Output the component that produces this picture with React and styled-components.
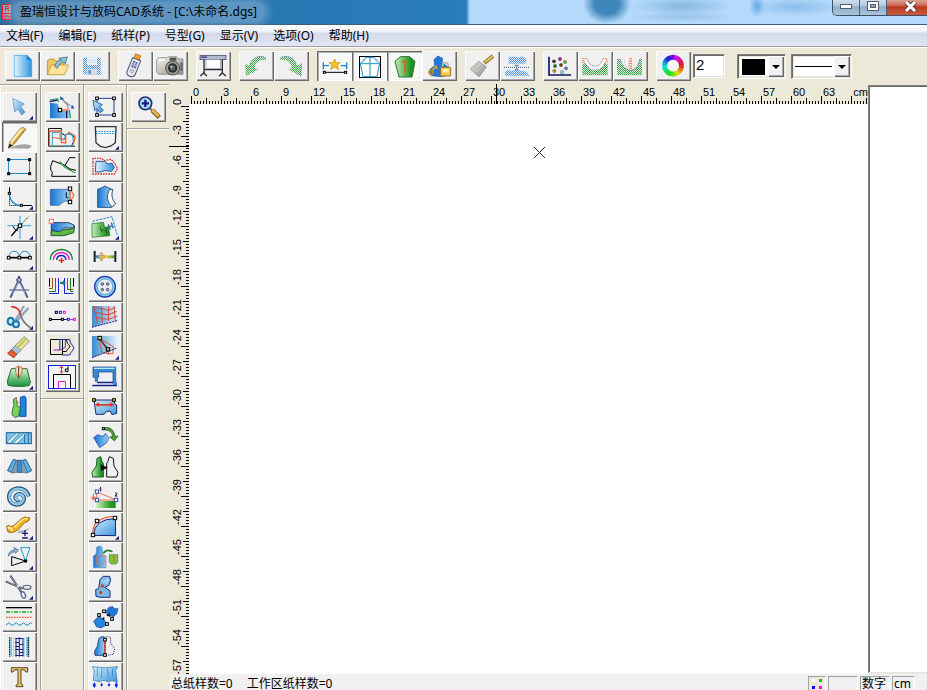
import React from 'react';
import styled, { createGlobalStyle, css } from 'styled-components';

const NAVY = '#1b1f7a';
const BLUE = '#1e78d8';

const Sq = ({ x, y, c = '#000', f = '#fff', r = 5 }) => (
  <rect x={x - r} y={y - r} width={r * 2} height={r * 2} fill={f} stroke={c} strokeWidth="3" />
);

const Line = ({ d, c = '#000', w = 3, f = 'none', dash }) => (
  <path d={d} stroke={c} strokeWidth={w} fill={f} strokeDasharray={dash} />
);

const hues = Array.from({ length: 24 }, (_, i) => i * 15);

const wheelArc = (deg) => {
  const a = ((deg - 90) * Math.PI) / 180;
  const b = ((deg - 74) * Math.PI) / 180;
  return `M${51 + 25 * Math.cos(a)} ${44 + 25 * Math.sin(a)} A25 25 0 0 1 ${51 + 25 * Math.cos(b)} ${44 + 25 * Math.sin(b)}`;
};

/* every drawing uses a 105 x 90 grid, three units to a pixel */
const art = {
  newFile: (
    <>
      <path d="M28 13H66L80 27V77H28Z" fill="url(#sheet)" stroke="#3a9be0" strokeWidth="2" />
      <path d="M66 13V27H80Z" fill="#1583d6" />
    </>
  ),
  open: (
    <>
      <path d="M22 30L28 24H42L47 30H72V70H22Z" fill="#f0c766" stroke="#a87a2a" strokeWidth="2" />
      <path d="M22 71L34 42H86L74 71Z" fill="#fde49a" stroke="#b5852e" strokeWidth="2" />
      <path d="M44 46C48 34 54 28 64 28L56 22L82 18L76 38L71 33C62 35 56 42 52 52Z" fill="#8cc4d8" stroke="#35566a" strokeWidth="2" />
    </>
  ),
  save: (
    <>
      <path d="M24 20H77V71H30L24 65Z" fill="url(#ditherBlue)" />
      <rect x="36" y="20" width="30" height="22" fill="#eef2f7" />
      <path d="M39 27H63M39 33H63" stroke="#b8cce2" strokeWidth="2" />
      <rect x="36" y="54" width="30" height="17" fill="#d2deea" />
      <rect x="40" y="57" width="8" height="12" fill="#6f93c0" />
    </>
  ),
  usb: (
    <g transform="rotate(22 50 45)">
      <rect x="39" y="10" width="17" height="16" fill="#f59a2c" stroke="#b2641a" strokeWidth="2" />
      <path d="M35 24H61V68Q61 79 48 79Q35 79 35 68Z" fill="#e8e8f2" stroke="#53536b" strokeWidth="3" />
      <rect x="41" y="32" width="14" height="20" fill="#5a64a8" />
      <path d="M41 38H55M41 44H55M48 32V52" stroke="#dfe3f6" strokeWidth="2" />
      <path d="M41 60H55M43 66H53" stroke="#8a8aa0" strokeWidth="3" />
    </g>
  ),
  camera: (
    <>
      <path d="M11 28L16 20H42L48 17H70L78 24H90V70H18L11 64Z" fill="url(#metal)" stroke="#77776f" strokeWidth="2" />
      <rect x="50" y="20" width="20" height="9" fill="#504f49" />
      <rect x="18" y="24" width="16" height="6" fill="#fff" />
      <circle cx="59" cy="51" r="21" fill="#9b9a92" stroke="#54534e" strokeWidth="3" />
      <circle cx="59" cy="51" r="14" fill="#2c2d2d" />
      <circle cx="59" cy="51" r="8" fill="#5b6768" />
      <circle cx="55" cy="47" r="3" fill="#dfe8e8" />
      <rect x="82" y="34" width="7" height="26" fill="#6c6b64" />
    </>
  ),
  plotter: (
    <>
      <rect x="12" y="13" width="78" height="13" fill="#b6b9d2" stroke="#34345c" strokeWidth="2" />
      <rect x="30" y="26" width="43" height="27" fill="#fdfdfd" stroke="#8c8c9c" strokeWidth="2" />
      <path d="M24 27V68M79 27V68M24 56H79" stroke="#2d2d38" strokeWidth="4" fill="none" />
      <path d="M13 75L23 66L33 75M69 75L79 66L90 75" stroke="#2d2d38" strokeWidth="4" fill="none" />
      <rect x="15" y="16" width="18" height="5" fill="#53578f" />
    </>
  ),
  undo: (
    <>
      <path d="M81 21C62 10 36 20 33 44L18 38L21 76L58 55L47 51C49 34 62 24 81 27Z" fill="url(#ditherGreen)" />
      <path d="M81 21C62 10 36 20 33 44" fill="none" stroke="#4d74b4" strokeWidth="3" strokeDasharray="3 3" />
    </>
  ),
  redo: (
    <>
      <path d="M19 21C38 10 64 20 67 44L83 38L80 76L43 55L54 51C52 34 38 24 19 27Z" fill="url(#ditherGreen)" />
      <path d="M19 21C38 10 64 20 67 44M83 38L80 76" fill="none" stroke="#4d74b4" strokeWidth="3" strokeDasharray="3 3" />
    </>
  ),
  starLine: (
    <>
      <Line d="M19 34V55M89 34V55M19 44H36M71 44H89" c="#1584c8" w={4} />
      <path d="M53 24L58 35H70L61 43L65 56L53 48L41 56L45 43L36 35H48Z" fill="#f5c328" stroke="#c48a12" strokeWidth="2" />
      <Line d="M22 64H86" />
      <Sq x={22} y={64} r={3} />
      <Sq x={86} y={64} r={3} />
    </>
  ),
  frame: (
    <>
      <rect x="22.5" y="16.5" width="63" height="63" fill="#fff" stroke="#000" strokeWidth="3" />
      <Line d="M42 19L25 37L33 77H75L83 37L66 19ZM54 17V78M25 38H83" c="#1d8fcb" />
      <Line d="M42 20L32 38M66 20L76 38" c="#6cb8e0" w={2} />
    </>
  ),
  greenPiece: (
    <>
      <path d="M24 31L40 17H68L84 31L75 78H36Z" fill="url(#greenSide)" stroke="#2f6a33" strokeWidth="3" />
      <path d="M46 35L54 29V68" stroke="#f05a28" strokeWidth="5" fill="none" />
    </>
  ),
  lock: (
    <>
      <path d="M36 26L47 15L62 22L60 35L84 52L80 72L58 77L28 74L24 55L38 44Z" fill={BLUE} stroke="#1954a8" strokeWidth="2" />
      <circle cx="27" cy="64" r="6" fill="none" stroke="#c18c1c" strokeWidth="5" />
      <Line d="M31 58L44 43M40 48L47 53" c="#d4a02c" w={5} />
      <path d="M62 50V43Q62 35 70 35Q79 35 79 43V50" fill="none" stroke="#b6b6b6" strokeWidth="5" />
      <rect x="56" y="49" width="30" height="26" rx="2" fill="#f6c94f" stroke="#9c7420" strokeWidth="3" />
      <rect x="62" y="54" width="18" height="10" fill="#fff1b0" />
    </>
  ),
  brush: (
    <>
      <Line d="M58 36L84 15" c="#8a7228" w={12} />
      <Line d="M60 34L83 16" c="#e8c864" w={6} />
      <path d="M41 31L64 48L42 77L16 54Z" fill="url(#metal)" stroke="#777" strokeWidth="2" />
      <Line d="M23 55L44 36M30 60L51 42M37 67L57 47" c="#999" w={2} />
    </>
  ),
  pieces: (
    <>
      <path d="M26 17H50L57 21L62 16L76 20L80 30L74 38H26Z" fill="url(#ditherBlue)" />
      <Line d="M12 49H90" c="#44546c" dash="3 3" />
      <path d="M15 64L24 56L36 60L48 57L70 60L82 64L88 74H15Z" fill="url(#ditherBlue)" />
      <path d="M42 41H58L50 48ZM42 58H58L50 51Z" fill="#6c86a8" />
    </>
  ),
  scatter: (
    <>
      <Line d="M18 17V72H84" c="#12126a" w={5} />
      {[
        [33, 31, '#333'], [51, 24, '#c0188c'], [66, 33, '#67b32c'], [36, 45, '#13883a'], [54, 42, '#7d3a12'],
        [69, 52, '#6078c8'], [34, 60, '#b99b18'], [57, 63, '#8fd8d8'],
      ].map(([x, y, c]) => (
        <circle key={c} cx={x} cy={y} r="5" fill={c} stroke="#333" strokeWidth="1" />
      ))}
    </>
  ),
  grassCurve: (
    <>
      <path d="M13 39L24 36C34 66 68 66 78 36L89 39V73H13Z" fill="url(#ditherGreen)" />
      <path d="M22 24C30 62 72 62 80 24" fill="none" stroke="#fff" strokeWidth="6" />
      <path d="M28 24C34 52 68 52 74 24M18 30C28 66 74 66 84 30" fill="none" stroke="#77779a" strokeWidth="2" strokeDasharray="4 2" />
      <Line d="M15 36V23H27M75 23H87V36" c="#ff6238" w={4} dash="3 3" />
    </>
  ),
  grassFold: (
    <>
      <path d="M12 22L20 24C24 44 36 56 53 58C68 56 78 44 80 24L87 22V73H12Z" fill="url(#ditherGreen)" />
      <path d="M22 25C26 45 38 56 53 58M80 25C76 45 68 56 53 58" fill="none" stroke="#6f7196" strokeWidth="3" strokeDasharray="4 2" />
      <path d="M34 25L38 44L46 50V25" fill="#fff" stroke="#999" strokeWidth="2" strokeDasharray="3 2" />
      <Line d="M53 21V56" c="#ff7a52" w={7} dash="3 2" />
    </>
  ),
  wheel: (
    <>
      {hues.map((h) => (
        <path key={h} d={wheelArc(h)} stroke={`hsl(${(280 + h) % 360} 90% 46%)`} strokeWidth="15" fill="none" />
      ))}
      <circle cx="51" cy="44" r="17" fill="#f8f8f8" />
    </>
  ),

  pointer: <path d="M32 19L67 36L56 43L69 61L59 69L47 51L38 60Z" fill="url(#sky)" stroke="#5f87b5" strokeWidth="2" />,
  pencil: (
    <>
      <path d="M20 79L44 70Q72 62 90 72L80 80Z" fill="#a4a4a0" />
      <path d="M19 79L23 60L56 18Q66 13 72 22L36 67Z" fill="#e9ca72" stroke="#84652a" strokeWidth="2" />
      <path d="M28 61L60 21" stroke="#fff4c4" strokeWidth="5" />
      <path d="M34 65L68 23" stroke="#b58b30" strokeWidth="4" />
      <path d="M19 79L22 66L33 70Z" fill="#222" />
    </>
  ),
  rect: (
    <>
      <Line d="M19.5 22.5H82.5V64.5H19.5Z" c="#1e8ac8" />
      {[[20, 23], [83, 23], [20, 65], [83, 65]].map(([x, y]) => (
        <Sq key={`${x}-${y}`} x={x} y={y} r={3} f="#1a4848" />
      ))}
    </>
  ),
  corner: (
    <>
      <Line d="M22.5 16V34M58 70.5H90" />
      <Line d="M22.5 34V70.5H58" dash="3 3" />
      <Line d="M22 34C24 56 34 70 58 70" c="#188ed0" w={4} />
      <Sq x={22} y={34} r={3} />
      <Sq x={58} y={70} r={3} />
    </>
  ),
  cross: (
    <>
      <Line d="M54 12V81M16 41H87" c="#56b2dc" w={4} />
      <Line d="M28 72L54 41" w={4} />
      <Line d="M54 41L80 14" dash="4 3" />
      <Line d="M33 43Q36 54 48 57" />
      <Sq x={54} y={41} />
    </>
  ),
  arcs: (
    <>
      <Line d="M20 44Q24 28 36 28Q50 28 52 44Q56 28 68 28Q82 28 84 44" c="#2188c4" />
      <Line d="M20 47H84" w={5} />
      <Sq x={20} y={47} r={4} />
      <Sq x={52} y={47} r={4} />
      <Sq x={84} y={47} r={4} />
    </>
  ),
  compass: (
    <>
      <Line d="M51 24L25 77M51 24L77 77" c="#4a5687" w={6} />
      <Line d="M50 30L32 65M52 30L70 65" c="#c5cde4" w={2} />
      <Line d="M22 54H82" c="#6872a0" w={4} />
      <circle cx="51" cy="24" r="7" fill="#9ba5c8" stroke="#3f4a78" strokeWidth="3" />
      <Line d="M51 12V19" c="#3f4a78" w={6} />
    </>
  ),
  cutCurve: (
    <>
      <Line d="M40 54L66 13M44 57L79 18" c="#6c87a8" w={6} />
      <Line d="M41 52L65 15M45 55L77 20" c="#dde9f2" w={2} />
      <ellipse cx="26" cy="58" rx="9" ry="11" fill="#c6e6f5" stroke="#1676ad" strokeWidth="6" />
      <ellipse cx="42" cy="67" rx="9" ry="9" fill="#c6e6f5" stroke="#1676ad" strokeWidth="6" />
      <Line d="M28 14C48 16 54 24 56 40" c="#e0281c" w={5} />
      <Line d="M56 40Q64 65 86 77" c="#777" w={5} />
    </>
  ),
  eraser: (
    <>
      <path d="M17 64L66 14L82 27L35 77Z" fill="#efe5a4" stroke="#5c6a35" strokeWidth="2" />
      <path d="M48 45L72 20" stroke="#c4ce68" strokeWidth="9" />
      <path d="M28 53L40 41L57 55L45 67Z" fill="#a5c4dc" stroke="#6e7f8e" strokeWidth="2" />
      <path d="M17 64L28 53L45 67L35 77Z" fill="#ec5a30" stroke="#8c3018" strokeWidth="2" />
    </>
  ),
  skirt: (
    <>
      <path d="M28 20H75L85 60L82 70L66 73H34L18 70L16 58Z" fill="url(#greenDown)" stroke="#2b6a36" strokeWidth="3" />
      <path d="M50 50L41 30V17L50 12L60 17V30Z" fill="#e8e4d0" stroke="#e56a28" strokeWidth="3" />
      <Line d="M50 14V48" c="#333" />
    </>
  ),
  twoPieces: (
    <>
      <path d="M55 16L68 12L72 19V73H52L55 45Z" fill="#1b84e0" stroke="#124a9c" strokeWidth="3" />
      <path d="M34 22L43 17L46 42L55 47L50 72L40 77L30 68L32 50L36 40Z" fill="#7ad05c" stroke="#347538" strokeWidth="3" />
      <Line d="M41 19L52 36" c="#ff8060" />
    </>
  ),
  slashRect: (
    <>
      <rect x="13" y="32" width="75" height="33" fill="#7cc4e6" stroke="#1c5e98" strokeWidth="3" />
      <path d="M14 61L44 33H52L24 64ZM32 64L68 33H76L46 64Z" fill="#e6f5fb" stroke="#276b9b" strokeWidth="2" />
      <Line d="M68 36V64M79 32V64" c="#1c6ca6" />
    </>
  ),
  pleats: (
    <>
      <path d="M34 22L43 25H62L71 22L89 56L73 63L62 61H43L31 63L16 56Z" fill="#8d9dac" stroke="#4a5a6a" strokeWidth="2" />
      <path d="M34 22L18 55L29 61L43 25Z" fill="#5cb2ea" stroke="#1c5c8e" strokeWidth="2" />
      <path d="M46 25H58V61H46Z" fill="#348fdf" stroke="#1c5c8e" strokeWidth="2" />
      <path d="M71 22L89 55L77 62L62 25Z" fill="#5cb2ea" stroke="#1c5c8e" strokeWidth="2" />
    </>
  ),
  spiral: (
    <>
      <Line d="M80 43C72 8 20 12 21 46C23 76 68 74 66 48C64 31 38 33 40 48C41 54 47 56 51 52" c="#28547e" w={12} />
      <Line d="M79 42C71 10 21 14 22 46C24 74 67 73 65 48C63 32 39 34 41 48C42 53 47 55 50 51" c="#8ccbec" w={7} />
    </>
  ),
  tape: (
    <>
      <path d="M52 55Q68 56 86 45L68 64H45Z" fill="#b8b8b4" />
      <path d="M14 43Q18 37 26 44L35 41L58 20Q68 11 84 18Q82 29 68 32L46 55Q32 65 18 60Z" fill="#f3b222" stroke="#9a6612" strokeWidth="3" />
      <path d="M36 47L60 24Q68 18 78 20" stroke="#ffe37c" strokeWidth="5" fill="none" />
      <path d="M17 48Q26 44 32 57" stroke="#fff0b0" strokeWidth="5" fill="none" />
      <Line d="M60 64H78M69 54V73M60 78H78" c={NAVY} w={4} />
    </>
  ),
  flipTri: (
    <>
      <Line d="M29 44V71L71 57Z" />
      <Line d="M56 17H84L70 57Z" c="#189ad0" />
      <path d="M18 42Q22 24 39 23L35 16L50 24L41 34L38 29Q28 29 20 42Z" fill="#95abc8" stroke="#49668c" strokeWidth="2" />
      <Sq x={71} y={57} r={3} f="#111" />
    </>
  ),
  scissors: (
    <>
      <Line d="M11 28L62 50M25 11L58 60" c="#404858" w={6} />
      <Line d="M13 28L60 49M26 13L57 57" c="#b9c8dd" w={2} />
      <ellipse cx="75" cy="46" rx="12" ry="6" fill="#f0f0f0" stroke="#606890" strokeWidth="4" />
      <ellipse cx="64" cy="69" rx="6" ry="10" fill="#f0f0f0" stroke="#606890" strokeWidth="4" transform="rotate(-22 64 69)" />
      <circle cx="48" cy="43" r="3" fill="#fff" />
    </>
  ),
  lineStyles: (
    <>
      <Line d="M12 17H90" w={4} />
      <Line d="M12 30H90" c="#18a31c" w={4} dash="12 4 4 4" />
      <Line d="M12 46H90" c="#f05a2c" w={4} dash="5 3" />
      <Line d="M12 69L21 62L28 69H34L43 62L50 69H56L65 62L72 69H78L86 62L90 65" c="#168cc4" />
    </>
  ),
  ladder: (
    <>
      <rect x="21" y="16" width="9" height="58" fill="#7cc4df" />
      <rect x="73" y="16" width="9" height="58" fill="#5bb0d2" />
      <Line d="M22.5 16V74M79.5 16V74" c="#111" dash="4 3" />
      <Line d="M35 16V74M68 16V74" c="#a8d4e4" />
      <Line d="M40 19.5H64M40 31.5H52M52 37.5H64M40 43.5H52M40 52.5H64M52 61.5H64M40 70.5H64M52 16V74M42 19V74M63 19V74" c={NAVY} />
    </>
  ),
  type: (
    <path d="M28 17H77V30H71Q70 23 62 23H57V66L63 70V74H42V70L48 66V23H42Q34 23 33 30H28Z" fill="#e7c66d" stroke="#584820" strokeWidth="3" />
  ),

  grade: (
    <>
      <path d="M15 32L38 35L46 57H66L76 53V79H15Z" fill="url(#blueSide)" />
      <Line d="M14 29L39 24M65 56V79" c="#18185c" w={4} />
      <Line d="M14 24L38 20L40 31M73 54L77 78" c="#159a48" />
      <Line d="M53 20Q56 31 65 34Q70 42 69 54H45" c="#f06a42" w={4} />
      <Line d="M48 16L61 31L85 46" c="#4c94d8" w={3} />
      <path d="M46 13L56 20L46 25ZM88 50L77 49L83 39Z" fill="#1656a8" />
      <Sq x={45} y={54} />
    </>
  ),
  nested: (
    <>
      <Line d="M10.5 72V19.5H49.5V34L60 40M10.5 72.5H90M70 30L90 48L80 72" c="#111" />
      <Line d="M13 73V27H49V61L62 63V38M62 38L75 33L90 42L87 61" c="#ff5c34" w={4} />
      <Line d="M22 73V31H45V52L57 54L62 38L82 36L86 65L80 72H56" c="#25a7d2" />
      <Line d="M21 46L60 52" c="#ff5c34" />
    </>
  ),
  foldCurve: (
    <>
      <Line d="M91 17H74L60 40L23 26L17 43V53L22 61L20 73H93" />
      <Line d="M44 28L58 44L74 54L91 63" c="#23a342" w={4} />
      <Line d="M60 40L75 51L93 55" />
    </>
  ),
  addCorner: (
    <>
      <path d="M16 22H75V59L62 57L51 62L43 70H16Z" fill="url(#blueSide)" stroke="#2854a0" strokeWidth="2" />
      <Line d="M75 21L87 40L75 60M75 21V60" c="#ef754e" w={4} />
      <Line d="M64 31V47H70" c="#111" />
      <Sq x={75} y={20} />
      <Sq x={75} y={60} />
    </>
  ),
  overlay: (
    <>
      <path d="M18 56L76 52L89 42L86 62L56 71H18Z" fill="#62b947" stroke="#205b2c" strokeWidth="3" />
      <path d="M19 32H71L88 40L85 48L56 48L44 60L19 55Z" fill="url(#blueSide)" stroke="#243e55" strokeWidth="3" />
      <Sq x={19} y={28} r={6} c="#f46a48" />
    </>
  ),
  rainbow: (
    <>
      <Line d="M16 54C16 12 82 12 82 54" c="#12882c" w={4} />
      <Line d="M25 54C26 24 72 24 73 54" c="#f518dc" w={4} />
      <Line d="M35 54C37 36 61 36 63 54" c="#1621c8" w={4} />
      <Line d="M49.5 47V63M41 55.5H58" c="#e01c1c" w={4} />
    </>
  ),
  spread: (
    <>
      <Line d="M13.5 18V44" />
      <Line d="M22.5 18V49.5H12M67.5 18V52.5H85" c="#9c4a20" />
      <Line d="M31.5 18V58.5H12M76.5 18V58.5H85" c="#1d7a26" />
      <Line d="M40.5 18V64.5H12M58.5 18V64.5H85" c="#1620d8" />
      <Line d="M85.5 18V44" />
      <path d="M45 29H54V24L63 33L54 41V36H45Z" fill="#167e83" />
    </>
  ),
  pointsRow: (
    <>
      <Sq x={34} y={31} r={3} />
      <Sq x={46} y={31} r={3} c="#1620ff" />
      <Sq x={58} y={31} r={3} c="#f015e0" />
      <Line d="M16 52.5H62" />
      <Line d="M62 52.5H76" c="#1620ff" />
      <Line d="M76 52.5H88" c="#f015e0" />
      <Sq x={16} y={52} r={3} />
      <Sq x={52} y={52} r={3} />
      <Sq x={70} y={52} r={3} c="#1620ff" />
      <Sq x={88} y={52} r={3} c="#f015e0" />
    </>
  ),
  layers: (
    <>
      <rect x="9" y="9" width="84" height="61" fill="#ece9d8" />
      <Line d="M16.5 22.5H52.5V67.5H16.5Z" />
      <Line d="M26 54H46L61 46V22" c="#951f91" />
      <Line d="M40 22.5H74C74 34 84 40 86 46C86 56 76 60 74 69H52" c="#1b26b8" />
      <Line d="M52 58.5H64C66 50 76 46 75 42C70 38 66 32 64 24" c="#111" />
      <Line d="M44.5 24V54" c="#1b26b8" />
    </>
  ),
  boxes: (
    <>
      <rect x="10.5" y="10.5" width="81" height="69" fill="#f4f4f4" stroke="#1620d8" strokeWidth="3" />
      <Line d="M25.5 79V37.5H76.5V79" />
      <Line d="M40.5 79V58.5H61.5V79" c="#ee15df" />
      <Line d="M49.5 15V31M44 18L49.5 13L55 18M44 28L49.5 33L55 28" c="#d81b1b" />
      <Line d="M69 13V29H61V21H69" />
    </>
  ),

  selectRect: (
    <>
      <Line d="M27 19H78V69H27Z" c="#283890" />
      {[[27, 19], [78, 19], [27, 69], [78, 69]].map(([x, y]) => (
        <Sq key={`${x}-${y}`} x={x} y={y} r={4} />
      ))}
      <path d="M15 25L43 38L35 44L46 55L36 62L26 50L20 56Z" fill="url(#sky)" stroke="#3568a5" strokeWidth="3" />
    </>
  ),
  pocket: (
    <>
      <path d="M22 14H84L82 62L69 72L52 77L37 73L24 62Z" fill="#f4f4f4" stroke="#333" strokeWidth="4" />
      <Line d="M24 28.5H82M24 34.5H82" c="#169bd0" dash="5 3" />
    </>
  ),
  seam: (
    <>
      <path d="M24 28H50L60 36L72 34L79 47L71 58L51 56L36 60H22Z" fill="url(#sheet)" stroke="#3654a1" strokeWidth="3" />
      <Line d="M15 31V19H40L48 26L70 22L77 31L89 48L79 66H15Z" c="#d12f25" w={4} dash="5 3" />
    </>
  ),
  facing: (
    <>
      <path d="M29 22L43 17L49 12L58 16L71 22V76H29Z" fill="url(#blueSide)" stroke="#23568d" strokeWidth="3" />
      <path d="M64 23H75Q65 43 83 66L72 75Q49 52 64 23Z" fill="#fff" stroke="#335a84" strokeWidth="3" />
    </>
  ),
  grain: (
    <>
      <path d="M12 35L46 31L50 46L61 44L66 71L12 76Z" fill="url(#greenSide)" stroke="#226b2b" strokeWidth="2" />
      <Line d="M13 28L72 14L88 71" c="#278bc4" dash="8 3" />
      <Line d="M36 43L41 61M53 49L58 66M39 53L55 57" c="#205f35" />
      <Line d="M61 37L67 53M70 32L76 49M64 45L73 41" c="#25679c" w={4} />
    </>
  ),
  stay: (
    <>
      <rect x="23" y="40" width="56" height="9" fill="url(#stayFill)" />
      <Line d="M20 27V60M82 27V60" c="#17202c" w={6} />
      <path d="M38 32H43V40H49V48H43V56H38V48H32V40H38Z" fill="#e8bc69" stroke="#654c26" strokeWidth="1" />
    </>
  ),
  button: (
    <>
      <circle cx="51" cy="44" r="31" fill="#84c9e8" stroke="#183eb2" strokeWidth="4" />
      <circle cx="51" cy="44" r="23" fill="#e9eef8" stroke="#5988cc" strokeWidth="2" />
      {[[43, 36], [59, 36], [43, 53], [59, 53]].map(([x, y]) => (
        <circle key={`${x}-${y}`} cx={x} cy={y} r="4" fill="#a4a4b4" stroke="#555a78" strokeWidth="3" />
      ))}
    </>
  ),
  mesh: (
    <>
      <path d="M12 12H90V55L12 76Z" fill="url(#blueFade)" />
      <Line d="M18 13L29 66M40 13L43 62M62 13L61 57M25 16L61 25L82 17M24 31L60 39L86 28M28 47L61 52L88 42M78 12L82 58" c="#e04334" />
      <Line d="M12 76L90 55" c={NAVY} dash="6 3" />
    </>
  ),
  dart: (
    <>
      <path d="M12 12H90V48L12 77Z" fill="url(#blueFade)" />
      <Line d="M34 17L41 60L64 66ZM38 21L76 44L75 65H57" c="#dc5642" />
      <Line d="M34 19L60 52" c="#333" w={4} />
      <Line d="M12 77L87 48" c={NAVY} dash="6 3" />
      <Sq x={35} y={18} f="#ffe650" />
      <Sq x={60} y={52} f="#c7b548" />
    </>
  ),
  sewing: (
    <>
      <path d="M15 15H83V66H75V30H32V46H28V58H22V46H15Z" fill="#2f8cdc" stroke="#204070" strokeWidth="2" />
      <Line d="M18 19H80" c="#bfe2f5" w={4} />
      <Line d="M13 70.5H87M27 61.5H75" c="#171f88" w={4} />
      <rect x="75" y="60" width="12" height="9" fill="#3e8bd4" />
    </>
  ),
  width: (
    <>
      <path d="M18 24H79V34L86 39V64L72 68L66 57L55 59L48 67H24Z" fill="url(#sky)" stroke="#1b2b67" strokeWidth="3" />
      <path d="M20 38L33 31V36H66V31L80 38L66 45V41H33V45Z" fill="#e0372e" />
      <Sq x={18} y={24} r={4} f="#ffe618" />
      <Sq x={78} y={24} r={4} f="#ffe618" />
    </>
  ),
  rotate: (
    <>
      <path d="M17 47L28 38L45 43L52 34L63 47L55 63L35 77Z" fill="url(#blueSide)" stroke="#243c9c" strokeWidth="2" />
      <path d="M47 17Q76 12 81 43L90 42L79 57L66 45L74 43Q72 24 50 24Z" fill="#4b9f35" stroke="#245020" strokeWidth="2" />
      <Sq x={46} y={20} r={3} />
    </>
  ),
  mirror: (
    <>
      <path d="M27 19L38 14L42 28L46 35V75H14L12 61L25 42Z" fill="url(#greenSide)" stroke="#21562a" strokeWidth="3" />
      <path d="M76 19L64 14L60 28L56 35V75H86L90 61L78 42Z" fill="#f0f0f0" stroke="#111" strokeWidth="3" />
      <path d="M38 37L60 47L38 57Z" fill="#111" />
    </>
  ),
  stretch: (
    <>
      <rect x="25" y="57" width="58" height="21" fill="url(#greenSide)" />
      <Line d="M26 29L84 54H26Z" c="#f36b48" />
      <Line d="M10 46H23M16 36V53M12 49L16 54L21 49" c="#f05234" />
      <Sq x={27} y={29} c="#324cb0" />
      <Sq x={27} y={54} c="#324cb0" />
      <Sq x={84} y={54} c="#324cb0" />
      <Line d="M35 19L38 16V28M82 33Q86 31 87 35L81 42H88" w={3} />
    </>
  ),
  cornerCurve: (
    <>
      <path d="M16 70Q20 20 82 20L83 71Z" fill="url(#sky)" stroke={NAVY} strokeWidth="3" />
      <Line d="M14 67C13 31 36 15 79 13" c="#ef6542" w={4} />
      <Sq x={15} y={69} />
      <Sq x={27} y={27} />
      <Sq x={81} y={18} />
    </>
  ),
  mapPocket: (
    <>
      <path d="M26 16L31 13H40L43 22V36L54 42V77H16V42L24 37Z" fill="url(#blueSide)" stroke="#518aba" strokeWidth="2" />
      <path d="M26 42H48V65L38 70L26 65Z" fill="none" stroke="#f06a35" strokeWidth="3" strokeDasharray="5 2" />
      <path d="M43 34Q55 15 76 28L69 31Q57 23 50 34Z" fill="#237e2b" />
      <path d="M64 38H89V60L84 66H69L64 60Z" fill="#7cc840" stroke="#2c7928" strokeWidth="2" />
      <path d="M73 46L78 43V61" stroke="#e65622" strokeWidth="3" fill="none" />
    </>
  ),
  pants: (
    <>
      <path d="M36 22L46 13H65L68 25L62 41L50 46L66 56V76H36L24 73L23 53L32 50Z" fill="#7bbce6" stroke="#202c7c" strokeWidth="3" />
      <path d="M42 29L57 17L64 24L58 36Z" fill="#9ed1ee" />
      <circle cx="43" cy="42" r="5" fill="#e0342c" />
      <circle cx="38" cy="61" r="5" fill="#e0342c" />
    </>
  ),
  join: (
    <>
      <path d="M54 28L63 16L74 14L80 20H90L86 35L77 44L58 40Z" fill={BLUE} stroke="#20409a" strokeWidth="2" />
      <path d="M17 57L34 42L52 58L56 68L39 78L25 74Z" fill="#2484dd" stroke="#20409a" strokeWidth="2" />
      <Sq x={48} y={28} r={4} />
      <Sq x={72} y={51} r={4} />
      <Sq x={33} y={39} r={4} />
      <Sq x={57} y={66} r={4} />
      <path d="M55 40L65 34L66 45ZM49 44L42 50L49 56Z" fill="#151515" />
    </>
  ),
  half: (
    <>
      <path d="M32 22L36 16L48 14L51 25V70H21L20 58L28 43Z" fill="url(#blueSide)" stroke="#244d88" strokeWidth="3" />
      <Line d="M53 14L68 16V34L80 50L76 67L54 70" c="#38386f" dash="3 3" />
      <Line d="M51 28V66" c="#ee3423" w={6} dash="8 3" />
      <Sq x={51} y={23} r={4} />
      <Sq x={51} y={69} r={4} />
    </>
  ),
  curtain: (
    <>
      <path d="M13 14Q52 21 89 14L83 25L88 61Q73 52 60 59Q43 52 36 59L16 55L19 26Z" fill="url(#sky)" stroke="#236eaa" strokeWidth="2" />
      <Line d="M28 18V44M42 20L40 48M58 20L61 47M74 18L73 43" c="#277abe" w={2} />
      <path d="M19 60L24 70L19 78L14 70ZM41 62L45 69L41 74L37 69ZM63 62L67 69L63 74L59 69ZM85 60L90 70L85 78L80 70Z" fill="#1621ea" />
    </>
  ),
  zoomIn: (
    <>
      <Line d="M58 50L66 58" c="#707070" w={7} />
      <Line d="M64 55L85 76" c="#7d6230" w={14} />
      <Line d="M64 54L83 73" c="#efb84a" w={8} />
      <circle cx="43" cy="34" r="19" fill="#a9dcf5" stroke="#222e78" strokeWidth="5" />
      <Line d="M43 23V45M32 34H54" c="#171b83" w={7} />
    </>
  ),
};

const Defs = () => (
  <HiddenDefs aria-hidden="true">
    <defs>
      <linearGradient id="sheet">
        <stop offset="0" stopColor="#e4f6ff" />
        <stop offset="1" stopColor="#2c94dc" />
      </linearGradient>
      <linearGradient id="blueSide">
        <stop offset="0" stopColor="#1874d4" />
        <stop offset="1" stopColor="#9ad0f4" />
      </linearGradient>
      <linearGradient id="blueFade">
        <stop offset="0" stopColor="#3c8ccc" />
        <stop offset="1" stopColor="#e6f3fb" />
      </linearGradient>
      <linearGradient id="sky" x2="1" y2="1">
        <stop offset="0" stopColor="#d8effa" />
        <stop offset="1" stopColor="#3a94de" />
      </linearGradient>
      <linearGradient id="greenSide">
        <stop offset="0" stopColor="#c4f0b4" />
        <stop offset="0.8" stopColor="#1d9420" />
      </linearGradient>
      <linearGradient id="greenDown" x2="0" y2="1">
        <stop offset="0" stopColor="#d5f4ca" />
        <stop offset="1" stopColor="#16943c" />
      </linearGradient>
      <linearGradient id="metal" x2="1" y2="1">
        <stop offset="0" stopColor="#f6f6f0" />
        <stop offset="1" stopColor="#8f8e87" />
      </linearGradient>
      <linearGradient id="stayFill">
        <stop offset="0" stopColor="#2482cf" />
        <stop offset="0.5" stopColor="#f6d95b" />
        <stop offset="1" stopColor="#5b9e33" />
      </linearGradient>
      <pattern id="ditherBlue" width="6" height="6" patternUnits="userSpaceOnUse">
        <rect width="6" height="6" fill="#eef4fc" />
        <path d="M0 0H3V3H0ZM3 3H6V6H3Z" fill="#4a8cdc" />
      </pattern>
      <pattern id="ditherGreen" width="6" height="6" patternUnits="userSpaceOnUse">
        <rect width="6" height="6" fill="#e6f3e6" />
        <path d="M0 0H3V3H0ZM3 3H6V6H3Z" fill="#35a040" />
      </pattern>
    </defs>
  </HiddenDefs>
);

const Tool = ({ name, label, pressed, more }) => (
  <ToolButton type="button" aria-label={label} $pressed={pressed}>
    <svg viewBox="0 0 105 90" width="35" height="30">
      {art[name]}
      {more && <path d="M93 71V83H81Z" fill={NAVY} />}
    </svg>
  </ToolButton>
);

const menus = ['文档(F)', '编辑(E)', '纸样(P)', '号型(G)', '显示(V)', '选项(O)', '帮助(H)'];

const topGroups = [
  [['newFile', '新建'], ['open', '打开'], ['save', '保存']],
  [['usb', '读纸样'], ['camera', '数码输入']],
  [['plotter', '绘图']],
  [['undo', '撤消'], ['redo', '重新执行']],
  [['starLine', '显示结构线', true], ['frame', '显示样片', true], ['greenPiece', '填充纸样', true], ['lock', '锁定纸样']],
  [['brush', '清除'], ['pieces', '合拢']],
  [['scatter', '点放码表'], ['grassCurve', '等分规'], ['grassFold', '定型放码']],
  [['wheel', '颜色设置']],
];

const designTools = [
  ['pointer', '调整', true], ['pencil', '智能笔'], ['rect', '矩形'], ['corner', '圆角', true], ['cross', '角度线', true],
  ['arcs', '等份规', true], ['compass', '圆规'], ['cutCurve', '剪断线', true], ['eraser', '橡皮擦'], ['skirt', '收省', true],
  ['twoPieces', '转省'], ['slashRect', '褶展开'], ['pleats', '分割展开'], ['spiral', '荷叶边'], ['tape', '比较长度', true],
  ['flipTri', '旋转', true], ['scissors', '剪刀', true], ['lineStyles', '线型'], ['ladder', '加花边'], ['type', '文字'],
];

const gradeTools = [
  ['grade', '平行交点'], ['nested', '辅助线平行'], ['foldCurve', '辅助线放码'], ['addCorner', '肩斜线放码'], ['overlay', '对齐'],
  ['rainbow', '等角度放码'], ['spread', '平行放码'], ['pointsRow', '拷贝放码量'], ['layers', '各码对齐'], ['boxes', '设定档差'],
];

const pieceTools = [
  ['selectRect', '选择纸样'], ['pocket', '缝迹线', true], ['seam', '加缝份'], ['facing', '做衬'], ['grain', '布纹线', true],
  ['stay', '剪口'], ['button', '钮扣'], ['mesh', '褶'], ['dart', 'V型省', true], ['sewing', '缝纫'],
  ['width', '水平调整'], ['rotate', '旋转纸样'], ['mirror', '翻转纸样'], ['stretch', '曲线替换'], ['cornerCurve', '曲线调整', true],
  ['mapPocket', '贴袋'], ['pants', '分割纸样'], ['join', '合并纸样'], ['half', '对称纸样'], ['curtain', '缩水'],
];

const across = Array.from({ length: 22 }, (_, i) => i * 3);
const down = across.slice(0, 20);

export default function App() {
  return (
    <Window>
      <GlobalStyle />
      <Defs />

      <TitleBar>
        <AppLogo viewBox="0 0 10 16">
          <rect x="0.5" y="0.5" width="9" height="15" rx="1" fill="#8fa4bc" stroke="#f01818" />
          <path d="M3.5 7V2.5H6Q7 2.5 7 3.5Q7 4.5 6 4.5H3.5M5.5 4.5L7 7" fill="none" stroke="#f01818" />
          <path d="M1 9.5H9M2 12H5M6 11V14M2 14H4M7 13H9" stroke="#f01818" />
        </AppLogo>
        <Title>盈瑞恒设计与放码CAD系统 - [C:\未命名.dgs]</Title>
        <Glass />
        <Controls>
          <Control type="button" aria-label="最小化">
            <svg width="12" height="5"><rect x="0.5" y="0.5" width="11" height="4" fill="#fff" stroke="#555c68" /></svg>
          </Control>
          <Control type="button" aria-label="最大化">
            <svg width="12" height="10">
              <rect x="0.5" y="0.5" width="11" height="9" fill="#fff" stroke="#555c68" />
              <rect x="3.5" y="3.5" width="5" height="3" fill="#8fa9c4" stroke="#555c68" />
            </svg>
          </Control>
          <Control type="button" aria-label="关闭" $close>
            <svg width="13" height="11">
              <path d="M2 1L11 10M11 1L2 10" stroke="#5b3a3e" strokeWidth="5" />
              <path d="M2 1L11 10M11 1L2 10" stroke="#fff" strokeWidth="3" />
            </svg>
          </Control>
        </Controls>
      </TitleBar>

      <MenuBar>
        {menus.map((m) => (
          <MenuItem key={m} type="button">{m}</MenuItem>
        ))}
      </MenuBar>

      <Toolbar>
        {topGroups.map((group) => (
          <Group key={group[0][0]}>
            {group.map(([name, label, pressed]) => (
              <Tool key={name} name={name} label={label} pressed={pressed} />
            ))}
          </Group>
        ))}
        <Count type="text" aria-label="等份数" defaultValue="2" />
        <Combo $wide={false}>
          <ColorSelect aria-label="线颜色"><option>黑</option></ColorSelect>
          <Arrow />
        </Combo>
        <Combo $wide>
          <LineSelect aria-label="线类型"><option>实线</option></LineSelect>
          <Arrow />
        </Combo>
      </Toolbar>

      <Body>
        <Column>
          {designTools.map(([name, label, more]) => (
            <Tool key={name} name={name} label={label} more={more} pressed={name === 'pencil'} />
          ))}
        </Column>
        <Column $ruled>
          {gradeTools.map(([name, label]) => <Tool key={name} name={name} label={label} />)}
          <ColumnEnd />
        </Column>
        <Column $ruled>
          {pieceTools.map(([name, label, more]) => <Tool key={name} name={name} label={label} more={more} />)}
        </Column>
        <Column $ruled>
          <Tool name="zoomIn" label="放大" />
          <ColumnEnd />
        </Column>

        <Work>
          <Views>
            <VRuler>
              <VLabels>
                {down.map((n) => <VLabel key={n}>{n === 0 ? '0' : `-${n}`}</VLabel>)}
              </VLabels>
              <VTicks />
              <VMark />
            </VRuler>
            <Sheet>
              <HRuler>
                <HLabels>
                  {across.map((n) => <HLabel key={n}>{n}</HLabel>)}
                  <Unit>cm</Unit>
                </HLabels>
                <HTicks />
                <HMark />
              </HRuler>
              <Canvas>
                <Cursor viewBox="0 0 11 11"><path d="M0 0L11 11M11 0L0 11" stroke="#222" /></Cursor>
              </Canvas>
            </Sheet>
            <SidePane />
          </Views>
          <StatusBar>
            <Counts>
              <span>总纸样数=0</span>
              <span>工作区纸样数=0</span>
            </Counts>
            <Cell $w={18}>
              <svg width="14" height="14">
                <rect width="14" height="14" fill="#ece9d8" />
                <rect x="2" y="2" width="3" height="3" fill="#fff" />
                <rect x="9" y="2" width="3" height="3" fill="#0c0" />
                <rect x="2" y="9" width="3" height="3" fill="#00f" />
                <rect x="9" y="9" width="3" height="3" fill="#f0f" />
              </svg>
            </Cell>
            <Cell $w={30} />
            <Cell $w={30}>数字</Cell>
            <Cell $w={23}>cm</Cell>
          </StatusBar>
        </Work>
      </Body>
    </Window>
  );
}

const GlobalStyle = createGlobalStyle`
  * { box-sizing: border-box; }
  body {
    margin: 0;
    overflow: hidden;
    font-family: 'Noto Sans', 'Noto Sans CJK SC', sans-serif;
    font-size: 12px;
    color: #000;
  }
  svg { display: block; flex: none; }
`;

const HiddenDefs = styled.svg`
  position: absolute;
  width: 0;
  height: 0;
`;

const Window = styled.div`
  display: flex;
  flex-direction: column;
  height: 100vh;
  background: #ece9d8;
`;

const TitleBar = styled.header`
  position: relative;
  display: flex;
  align-items: center;
  height: 25px;
  flex: none;
  padding-left: 2px;
  border-bottom: 1px solid #3f5c78;
  background: linear-gradient(90deg, #2f6d9f 0, #2878b4 300px, #2a7cba 466px, #b5d9fb 470px);
`;

const AppLogo = styled.svg`
  width: 10px;
  height: 16px;
`;

const Title = styled.h1`
  position: relative;
  z-index: 1;
  margin: 0;
  padding: 0 8px;
  font-size: 12px;
  font-weight: normal;
  line-height: 20px;
  white-space: nowrap;
  border-radius: 10px;
  background: rgba(170, 200, 225, 0.4);
  box-shadow: 0 0 8px 4px rgba(170, 200, 225, 0.4);
`;

const Glass = styled.div`
  position: absolute;
  inset: 0 0 0 470px;
  background:
    radial-gradient(ellipse 24px 20px at 137px 4px, #3d87ba 0 50%, transparent),
    radial-gradient(ellipse 50px 10px at 212px 6px, rgba(100, 160, 205, 0.6), transparent),
    radial-gradient(ellipse 55px 5px at 212px 17px, rgba(120, 170, 210, 0.5), transparent),
    radial-gradient(ellipse 8px 12px at 287px 6px, rgba(70, 155, 220, 0.7), transparent),
    radial-gradient(ellipse 45px 9px at 325px 7px, rgba(110, 170, 225, 0.6), transparent);
`;

const Controls = styled.div`
  position: relative;
  display: flex;
  align-self: flex-start;
  width: 95px;
  height: 16px;
  margin-left: auto;
  border: 1px solid #3d5068;
  border-width: 0 0 1px 1px;
  border-radius: 0 0 0 5px;
  overflow: hidden;
`;

const Control = styled.button`
  display: flex;
  justify-content: center;
  align-items: center;
  width: ${(props) => (props.$close ? '48px' : '27px')};
  flex: none;
  padding: 0 0 3px;
  border: none;
  border-right: 1px solid #4e6279;
  background: ${(props) =>
    props.$close
      ? 'linear-gradient(#dca394 0, #cf6a55 35%, #b93a22 45%, #c65b3c)'
      : 'linear-gradient(#cfdfee 0, #b4cbe0 35%, #93aec9 45%, #a9c5dd)'};
`;

const MenuBar = styled.nav`
  display: flex;
  align-items: center;
  gap: 15px;
  height: 22px;
  flex: none;
  padding: 0 6px;
  border-bottom: 1px solid #a0a0a0;
  background: linear-gradient(#fff 0, #f0f3fa 30%, #d5daeb 40%, #e2e7f6);
`;

const MenuItem = styled.button`
  padding: 0;
  border: none;
  background: none;
  color: #000;
  font: inherit;
  line-height: 20px;
  white-space: nowrap;
`;

const Toolbar = styled.div`
  display: flex;
  align-items: center;
  height: 37px;
  flex: none;
  padding: 0 5px;
  border-top: 1px solid #fff;
`;

const Group = styled.div`
  display: flex;

  & + & {
    margin-left: 8px;
  }
`;

const ToolButton = styled.button`
  display: block;
  width: 35px;
  height: 30px;
  flex: none;
  padding: 0;
  border: none;
  background: #f0f0f0;
  box-shadow: inset 1px 1px #fff, inset -1px -1px #696969, inset -2px -2px #a8a8a8;

  ${(props) =>
    props.$pressed &&
    css`
      background: repeating-conic-gradient(#fff 0 25%, #f0f0f0 0 50%) 0 0 / 2px 2px;
      box-shadow: inset 1px 1px #696969, inset 2px 2px #b0b0b0, inset -1px -1px #fff;
    `}
`;

const sunken = css`
  border: 1px solid;
  border-color: #808080 #fff #fff #808080;
  box-shadow: inset 1px 1px #696969, inset -1px -1px #e3e3e3;
`;

const Count = styled.input`
  ${sunken}
  width: 32px;
  height: 24px;
  margin: 0 12px 0 2px;
  padding: 0 2px 4px;
  background: #fff;
  font-family: 'Liberation Sans', sans-serif;
  font-size: 15px;
`;

const Combo = styled.div`
  ${sunken}
  position: relative;
  width: ${(props) => (props.$wide ? '61px' : '49px')};
  height: 25px;
  margin-right: 5px;
`;

const select = css`
  display: block;
  width: 100%;
  height: 100%;
  padding: 0;
  border: 2px solid transparent;
  appearance: none;
  color: transparent;
  font-size: 12px;
`;

const ColorSelect = styled.select`
  ${select}
  background: linear-gradient(#000, #000) 2px 2px / 23px 16px no-repeat #fff;
  background-clip: padding-box;
`;

const LineSelect = styled.select`
  ${select}
  background: linear-gradient(#000, #000) 1px 9px / 37px 1px no-repeat #fff;
  background-clip: padding-box;
`;

const Arrow = styled.span`
  position: absolute;
  top: 1px;
  right: 1px;
  bottom: 1px;
  width: 16px;
  background: #f0f0f0;
  box-shadow: inset 1px 1px #fff, inset -1px -1px #696969, inset -2px -2px #a8a8a8;
  pointer-events: none;

  &::after {
    content: '';
    position: absolute;
    top: 9px;
    left: 4px;
    border: 4px solid transparent;
    border-top-color: #000;
    border-bottom: none;
  }
`;

const Body = styled.main`
  display: flex;
  flex: 1;
  min-height: 0;
`;

const Column = styled.div`
  width: ${(props) => (props.$ruled ? '43px' : '40px')};
  flex: none;
  padding: 7px 0 0 ${(props) => (props.$ruled ? '4px' : '2px')};
  border-top: 1px solid #a0a0a0;
  border-left: ${(props) => (props.$ruled ? '1px solid #a0a0a0' : 'none')};
  box-shadow: inset 1px 1px #fff;
  overflow: hidden;
`;

const ColumnEnd = styled.div`
  height: 2px;
  margin: 6px 0 0 -4px;
  border-top: 1px solid #a0a0a0;
  background: #fff;
`;

const Work = styled.div`
  display: flex;
  flex-direction: column;
  flex: 1;
  min-width: 0;
`;

const Views = styled.div`
  display: flex;
  flex: 1;
  min-height: 0;
`;

const VRuler = styled.div`
  position: relative;
  display: flex;
  width: 20px;
  flex: none;
  overflow: hidden;
`;

const VLabels = styled.div`
  width: 12px;
  flex: none;
  font-family: 'Liberation Sans', sans-serif;
  font-size: 11px;
  line-height: 16px;
`;

const VLabel = styled.div`
  width: 16px;
  height: 30px;
  padding-top: 1px;
  writing-mode: vertical-rl;
  transform: rotate(180deg);

  &:first-child {
    height: 22px;
  }
`;

const VTicks = styled.div`
  width: 8px;
  flex: none;
  margin-top: 22px;
  background:
    repeating-linear-gradient(#000 0 1px, transparent 1px 30px) right / 8px 100% no-repeat,
    repeating-linear-gradient(#000 0 1px, transparent 1px 15px) right / 6px 100% no-repeat,
    repeating-linear-gradient(#000 0 1px, transparent 1px 3px) right / 3px 100% no-repeat;
`;

const VMark = styled.i`
  position: absolute;
  top: 62px;
  left: 0;
  width: 20px;
  height: 1px;
  background: #000;
`;

const Sheet = styled.div`
  display: flex;
  flex-direction: column;
  flex: 1;
  min-width: 0;
`;

const HRuler = styled.div`
  position: relative;
  height: 20px;
  flex: none;
  overflow: hidden;
`;

const HLabels = styled.div`
  display: flex;
  height: 12px;
  padding: 2px 0 0 4px;
  font-family: 'Liberation Sans', sans-serif;
  font-size: 11px;
  line-height: 12px;
`;

const HLabel = styled.span`
  width: 30px;
  flex: none;
`;

const Unit = styled.span`
  margin-left: auto;
`;

const HTicks = styled.div`
  height: 8px;
  margin-left: 2px;
  background:
    repeating-linear-gradient(90deg, #000 0 1px, transparent 1px 30px) bottom / 100% 8px no-repeat,
    repeating-linear-gradient(90deg, #000 0 1px, transparent 1px 15px) bottom / 100% 6px no-repeat,
    repeating-linear-gradient(90deg, #000 0 1px, transparent 1px 3px) bottom / 100% 3px no-repeat;
`;

const HMark = styled.i`
  position: absolute;
  top: 0;
  left: 307px;
  width: 1px;
  height: 20px;
  background: #000;
`;

const Canvas = styled.section`
  position: relative;
  flex: 1;
  background: #fff;
`;

const Cursor = styled.svg`
  position: absolute;
  top: 43px;
  left: 345px;
  width: 11px;
  height: 11px;
`;

const SidePane = styled.aside`
  width: 59px;
  flex: none;
  margin: 1px 0;
  border: 1px solid #808080;
  border-width: 1px 0 1px 1px;
  border-bottom-color: #e3e3e3;
  background: #fff;
  box-shadow: inset 1px 1px #696969;
`;

const StatusBar = styled.footer`
  display: flex;
  gap: 2px;
  height: 16px;
  flex: none;
  padding: 2px 12px 0 2px;
  background: #f0f0f0;
  line-height: 16px;
  overflow: hidden;
`;

const Counts = styled.div`
  display: flex;
  flex: 1;
  gap: 14px;
  white-space: nowrap;
`;

const Cell = styled.div`
  width: ${(props) => props.$w}px;
  height: 20px;
  padding: 0 1px;
  border: 1px solid;
  border-color: #a0a0a0 #fff #fff #a0a0a0;
  line-height: 14px;
  white-space: nowrap;
`;
